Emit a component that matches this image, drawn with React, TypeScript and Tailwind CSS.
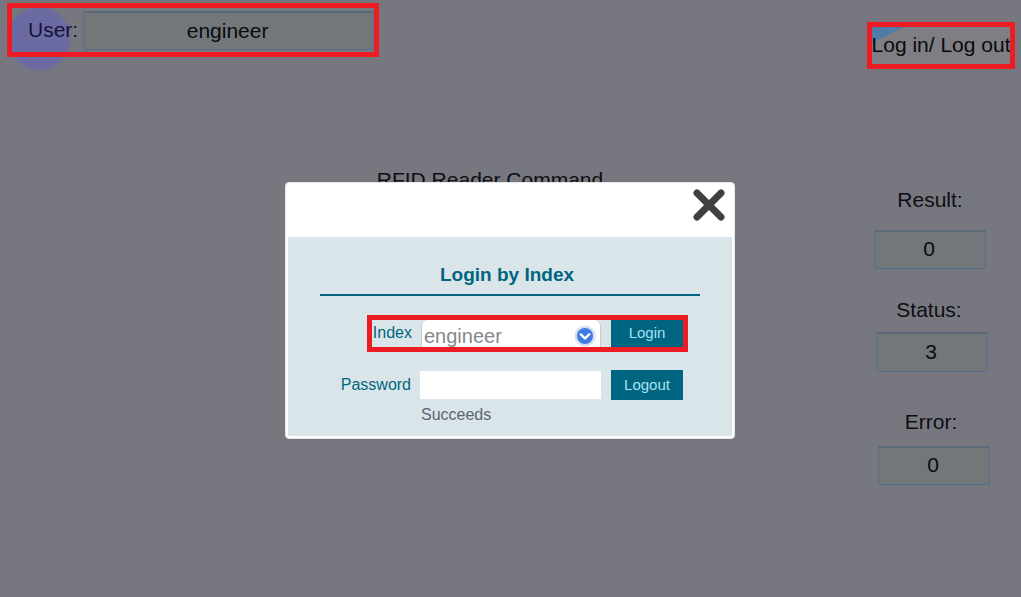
import React from "react";

const font = { fontFamily: '"Liberation Sans", Arial, sans-serif' };

const ReadOut = ({ label, value, className, labelClass, boxClass }: { label: string; value: string; className: string; labelClass: string; boxClass: string }) => (
	<div className={`flex w-[112px] flex-col items-center ${className}`}>
		<div className={`text-[21px] leading-[24px] text-[#0e0e13] ${labelClass}`}>{label}</div>
		<div className={`flex w-[112px] items-center justify-center rounded-[2px] border border-[#566e8c] border-t-2 border-t-[#5b6a78] bg-[#72777a] pb-[2px] pr-[2px] text-[21px] text-[#0a0a0e] ${boxClass}`}>
			{value}
		</div>
	</div>
);

const LoginModal = () => (
	<div className="absolute left-[285px] top-[182px] h-[257px] w-[450px] rounded-[4px] border border-[#e4e6e8] bg-white px-[2px] pb-[2px]">
		<div className="flex h-[54px] items-start justify-end pr-[7px] pt-[6px]">
			<svg viewBox="0 0 32 32" className="h-[32px] w-[32px]">
				<path d="M4 4 L28 28 M28 4 L4 28" stroke="#404040" strokeWidth="7" strokeLinecap="round" />
			</svg>
		</div>
		<div className="relative flex h-[199px] flex-col bg-[#dae5ea] px-[32px]">
			<div className="mt-[26px] pr-[6px] text-center text-[19px] font-bold leading-[24px] text-[#006580]">Login by Index</div>
			<div className="mt-[7px] h-[2px] bg-[#006580]" />
			<div className="mt-[24px] flex h-[28px] items-center">
				<div className="w-[92px] pb-[3px] text-right text-[16px] text-[#006580]">Index</div>
				<div className="ml-[9px] flex h-[28px] w-[180px] items-center justify-between rounded-t-[6px] border-x border-x-[#c9cdd2] bg-white pl-[2px] pr-[4px] pt-[4px] text-[20px] text-[#85888c]">
					<span>engineer</span>
					<svg viewBox="0 0 22 22" className="h-[22px] w-[22px]">
						<circle cx="11" cy="11" r="10.5" fill="#d5dff2" />
						<circle cx="11" cy="11" r="8" fill="#3f7be0" />
						<path d="M6.8 9.4 L11 13.4 L15.2 9.4" fill="none" stroke="#fff" strokeWidth="2.4" strokeLinecap="round" strokeLinejoin="round" />
					</svg>
				</div>
				<div className="ml-[10px] flex h-[27px] w-[72px] items-center justify-center self-start bg-[#006580] text-[15px] text-[#a9e2f2]">Login</div>
			</div>
			<div className="mt-[22px] flex h-[30px] items-center">
				<div className="w-[91px] pb-[1px] text-right text-[16px] text-[#006580]">Password</div>
				<div className="ml-[9px] h-[28px] w-[181px] bg-white" />
				<div className="ml-[10px] flex h-[30px] w-[72px] items-center justify-center bg-[#006580] text-[15px] text-[#a9e2f2]">Logout</div>
			</div>
			<div className="ml-[101px] mt-[5px] text-[16px] leading-[20px] text-[#5c666c]">Succeeds</div>
			<div className="absolute left-[79px] top-[78px] h-[37px] w-[321px] border-[5px] border-[#ed1c24]" />
		</div>
	</div>
);

export default function App() {
	return (
		<div className="relative flex h-[597px] w-[1021px] flex-col overflow-hidden bg-[#777780]" style={font}>
			<div className="flex items-start justify-between pl-[7px] pr-[6px] pt-[3px]">
				<div className="relative">
					<div className="absolute left-[1px] top-[4px] h-[63px] w-[62px] rounded-full bg-[#6c6aa2] blur-[1px]" />
					<div className="relative flex h-[54px] w-[372px] items-center border-[5px] border-[#ed1c24] pl-[16px]">
						<span className="text-[21px] text-[#14133a]">User:</span>
						<div className="ml-[5px] flex h-[39px] w-[292px] items-center justify-center rounded-[2px] border border-[#55708c] border-t-2 border-t-[#5b6a78] bg-[#72777a] pr-[2px] text-[21px] text-[#0a0a0e]">
							engineer
						</div>
					</div>
				</div>
				<div className="relative mt-[19px] flex h-[47px] w-[148px] items-center justify-center overflow-hidden border-[5px] border-[#ed1c24] bg-[#7e7e84] pb-[2px] text-[21px] whitespace-nowrap text-[#0a0a0e]">
					<div className="absolute left-0 top-0 h-0 w-0 border-r-[32px] border-t-[16px] border-r-transparent border-t-[#527ca8]" />
					<span className="relative">Log in/ Log out</span>
				</div>
			</div>
			<div className="flex">
				<div className="w-[980px] pt-[99px] text-center text-[21px] leading-[24px] text-[#0e0e13]">RFID Reader Command</div>
			</div>
			<div className="absolute right-[31px] top-[188px] flex flex-col">
				<ReadOut label="Result:" value="0" className="-translate-x-[4px]" labelClass="" boxClass="mt-[18px] h-[39px]" />
				<ReadOut label="Status:" value="3" className="mt-[29px] -translate-x-[2px]" labelClass="pr-[6px]" boxClass="mt-[10px] h-[40px]" />
				<ReadOut label="Error:" value="0" className="mt-[38px]" labelClass="pr-[6px]" boxClass="mt-[12px] h-[39px]" />
			</div>
			<LoginModal />
		</div>
	);
}
